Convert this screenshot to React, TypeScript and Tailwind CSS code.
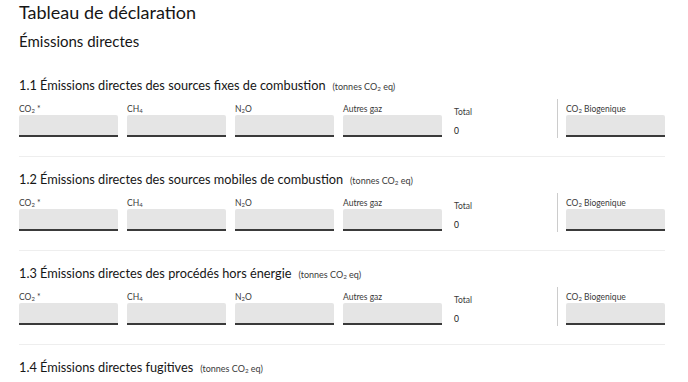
import React from "react";

const font = { fontFamily: 'Lato, "Noto Sans", sans-serif' };

function Sub({ children }: { children: React.ReactNode }) {
  return <sub className="text-[0.7em] align-baseline relative top-[0.2em]">{children}</sub>;
}

function Field({ label }: { label: React.ReactNode }) {
  return (
    <div className="w-[99px] flex flex-col">
      <div className="h-[14px] pt-[3px] text-[8.5px] leading-[11px] text-[#3a3a3a]">{label}</div>
      <div className="h-[22px] bg-[#e5e5e5] rounded-t-[2px] border-b-2 border-[#3a3a3a]" />
    </div>
  );
}

function Section({ title, last }: { title: string; last?: boolean }) {
  return (
    <div className={last ? "" : "pb-[18px] border-b border-[#eeeeee] w-[646px]"}>
      <div className="flex items-baseline h-[22px]">
        <span className="text-[12.75px] text-[#161616]">{title}</span>
        <span className="ml-[7px] text-[9px] text-[#3a3a3a]">
          (tonnes CO<Sub>2</Sub> eq)
        </span>
      </div>
      {!last && (
        <div className="flex mt-[3px]">
          <div className="flex gap-[9px]">
            <Field label={<>CO<Sub>2</Sub> *</>} />
            <Field label={<>CH<Sub>4</Sub></>} />
            <Field label={<>N<Sub>2</Sub>O</>} />
            <Field label="Autres gaz" />
          </div>
          <div className="w-[116px] pl-[12px] pt-[5px] text-[8.5px] text-[#3a3a3a]">
            <div className="h-[13px] leading-[13px]">Total</div>
            <div className="mt-[6px] h-[13px] leading-[13px] text-[#161616]">0</div>
          </div>
          <div className="border-l border-[#cccccc] pl-[8px] mt-[-2px] pt-[2px]">
            <Field label={<>CO<Sub>2</Sub> Biogenique</>} />
          </div>
        </div>
      )}
    </div>
  );
}

export default function App() {
  return (
    <div className="w-[688px] h-[382px] bg-white overflow-hidden px-[19px]" style={font}>
      <h1 className="text-[18px] leading-[24px] text-[#161616] pt-0">Tableau de déclaration</h1>
      <h2 className="mt-[7px] text-[15px] leading-[20px] text-[#161616]">Émissions directes</h2>
      <div className="mt-[25px] flex flex-col gap-[13px]">
        <Section title="1.1 Émissions directes des sources fixes de combustion" />
        <Section title="1.2 Émissions directes des sources mobiles de combustion" />
        <Section title="1.3 Émissions directes des procédés hors énergie" />
        <Section title="1.4 Émissions directes fugitives" last />
      </div>
    </div>
  );
}
